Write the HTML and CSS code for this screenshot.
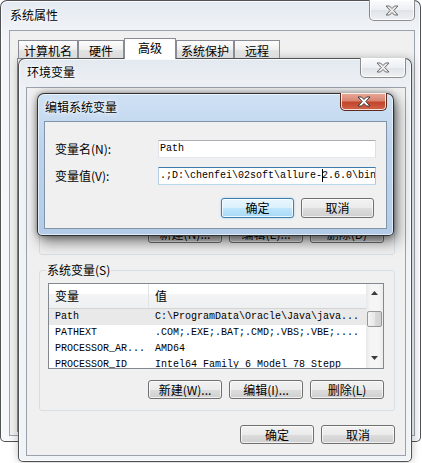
FILE: index.html
```html
<!DOCTYPE html>
<html lang="zh-CN">
<head>
  <meta charset="UTF-8">
  <title>编辑系统变量</title>
  <link rel="stylesheet" href="styles.css">
</head>
<body>
<div class="desktop">

  <!-- 系统属性 (back window) -->
  <div class="win sys">
    <div class="titlebar">
      <span class="title">系统属性</span>
      <span class="close"><svg width="14" height="11" viewBox="0 0 14 11"><polygon points="1,1 4.5,1 7,3.5 9.5,1 13,1 8.8,5.5 13,10 9.5,10 7,7.5 4.5,10 1,10 5.2,5.5"/></svg></span>
    </div>
    <div class="client">
      <div class="tabs">
        <span class="tab">计算机名</span>
        <span class="tab two">硬件</span>
        <span class="tab on">高级</span>
        <span class="tab narrow">系统保护</span>
        <span class="tab two">远程</span>
      </div>
      <div class="tabpage"></div>
    </div>
  </div>

  <!-- 环境变量 -->
  <div class="win env">
    <div class="titlebar">
      <span class="title">环境变量</span>
      <span class="close"><svg width="14" height="11" viewBox="0 0 14 11"><polygon points="1,1 4.5,1 7,3.5 9.5,1 13,1 8.8,5.5 13,10 9.5,10 7,7.5 4.5,10 1,10 5.2,5.5"/></svg></span>
    </div>
    <div class="client">
      <!-- user group sits behind the edit dialog -->
      <fieldset class="group user">
        <div class="list user">
          <div class="rows">
            <div class="row head"></div>
          </div>
        </div>
        <div class="btnrow">
          <span class="btn">新建(N)...</span>
          <span class="btn">编辑(E)...</span>
          <span class="btn">删除(D)</span>
        </div>
      </fieldset>

      <fieldset class="group">
        <legend>系统变量(S)</legend>
        <div class="list">
          <div class="rows">
            <div class="row head"><span class="c1">变量</span><span class="c2">值</span></div>
            <div class="row mono sel"><span class="c1">Path</span><span class="c2">C:\ProgramData\Oracle\Java\java...</span></div>
            <div class="row mono"><span class="c1">PATHEXT</span><span class="c2">.COM;.EXE;.BAT;.CMD;.VBS;.VBE;....</span></div>
            <div class="row mono"><span class="c1">PROCESSOR_AR...</span><span class="c2">AMD64</span></div>
            <div class="row mono"><span class="c1">PROCESSOR_ID</span><span class="c2">Intel64 Family 6 Model 78 Stepp</span></div>
          </div>
          <div class="vscroll">
            <span class="arrow"><svg width="7" height="4" viewBox="0 0 7 4"><polygon points="0,4 3.5,0 7,4"/></svg></span>
            <span class="thumb"></span>
            <span class="arrow down"><svg width="7" height="4" viewBox="0 0 7 4"><polygon points="0,0 7,0 3.5,4"/></svg></span>
          </div>
        </div>
        <div class="btnrow">
          <span class="btn">新建(W)...</span>
          <span class="btn">编辑(I)...</span>
          <span class="btn">删除(L)</span>
        </div>
      </fieldset>

      <div class="btnrow dlg">
        <span class="btn">确定</span>
        <span class="btn">取消</span>
      </div>
    </div>
  </div>

  <!-- 编辑系统变量 (active dialog) -->
  <div class="win edit">
    <div class="titlebar">
      <span class="title">编辑系统变量</span>
      <span class="close red"><svg width="14" height="11" viewBox="0 0 14 11"><polygon points="1,1 4.5,1 7,3.5 9.5,1 13,1 8.8,5.5 13,10 9.5,10 7,7.5 4.5,10 1,10 5.2,5.5"/></svg></span>
    </div>
    <div class="client">
      <div class="form">
        <label>变量名(N):</label>
        <div class="field mono">Path</div>
        <label>变量值(V):</label>
        <div class="field focus mono">.;D:\chenfei\02soft\allure-<span class="caret"></span>2.6.0\bin</div>
      </div>
      <div class="btnrow edit-btns">
        <span class="btn def">确定</span>
        <span class="btn">取消</span>
      </div>
    </div>
  </div>

</div>
</body>
</html>
```

FILE: styles.css
```css
* {
  box-sizing: border-box;
}

body {
  margin: 0;
  background: #fff;
  font-family: "Noto Sans CJK SC", sans-serif;
  font-size: 12px;
  color: #000;
}

.desktop {
  position: relative;
  width: 422px;
  height: 463px;
  overflow: hidden;
  background: #fff;
}

.mono {
  font-family: "Liberation Mono", "Noto Sans CJK SC", monospace;
  font-size: 10px;
}

/* aero windows */
.win {
  position: absolute;
  display: flex;
  flex-direction: column;
  border: 1px solid rgba(40, 40, 40, 0.8);
  border-radius: 7px 7px 5px 5px;
  box-shadow: inset 0 0 0 1px rgba(255, 255, 255, 0.75);
}

.titlebar {
  display: flex;
  justify-content: space-between;
  align-items: flex-start;
  flex: none;
}

.title {
  margin-left: 1px;
  line-height: 14px;
  text-shadow: 0 0 6px #fff, 0 0 3px #fff;
}

.close {
  display: flex;
  align-items: center;
  justify-content: center;
  width: 46px;
  height: 20px;
  margin-top: -1px;
  border: 1px solid rgba(70, 70, 70, 0.6);
  border-top: 0;
  border-radius: 0 0 5px 5px;
  background: linear-gradient(#fbfcfd, #eceff3 50%, #dfe3e8 51%, #eef1f4);
  box-shadow: inset 0 0 0 1px rgba(255, 255, 255, 0.8);
}
.close svg {
  fill: #ececec;
  stroke: #6b6b6b;
  stroke-width: 1;
}
.close.red {
  width: 47px;
  height: 18px;
  border-color: #5e2a20;
  background: linear-gradient(#eaa999, #d98672 45%, #c2452c 55%, #d0654b);
}
.close.red svg {
  fill: #fff;
  stroke: #3a3a3a;
}

.client {
  flex: 1;
  background: #f0f0f0;
  border: 1px solid #9aa3ad;
}

/* 系统属性 */
.sys {
  left: 0;
  top: 0;
  width: 421px;
  height: 442px;
  padding: 0 5px 5px 8px;
  background: linear-gradient(#e4eaf1, #f4f6f9 40px, #f5f7fa);
}
.sys .titlebar {
  height: 29px;
}
.sys .title {
  padding-top: 7px;
}
.sys .close {
  height: 21px;
}
.sys .client {
  display: flex;
  flex-direction: column;
  padding: 6px 0 3px 7px;
}

.tabs {
  position: relative;
  z-index: 1;
  display: flex;
  align-items: flex-end;
  height: 21px;
  margin-left: 1px;
}
.tab {
  height: 18px;
  padding: 2px 5px 0;
  line-height: 16px;
  border: 1px solid #898c95;
  border-bottom: 0;
  background: linear-gradient(#fdfdfd, #efefef 50%, #e3e3e3 51%, #dcdcdc);
}
.tab.two {
  padding: 2px 10px 0;
}
.tab.narrow {
  padding: 2px 4px 0;
}
.tab.on {
  height: 21px;
  padding: 1px 13px 0;
  margin-bottom: -1px;
  background: #fff;
}

.tabpage {
  flex: 1;
  margin-right: 8px;
  background: #fff;
  border: 1px solid #898c95;
}

/* 环境变量 */
.env {
  left: 18px;
  top: 58px;
  width: 394px;
  height: 404px;
  padding: 0 5px 5px 7px;
  background: linear-gradient(#e3e9f0, #eef1f5 30px, #f1f4f7);
  box-shadow: 0 0 8px rgba(0, 0, 0, 0.25), inset 0 0 0 1px rgba(255, 255, 255, 0.75);
}
.env .titlebar {
  height: 28px;
}
.env .title {
  padding-top: 6px;
}
.env .client {
  padding: 0 10px 0 12px;
}

.group {
  margin: 8px 0 0;
  padding: 6px 10px 11px 8px;
  min-width: 0;
  border: 1px solid #d5dfe5;
  border-radius: 3px;
}
.group.user {
  margin-top: 15px;
  padding-top: 12px;
}
.group legend {
  padding: 0 1px;
  margin-left: -2px;
  line-height: 14px;
}

.list {
  display: flex;
  height: 86px;
  border: 1px solid #828790;
  background: #fff;
  overflow: hidden;
}
.list.user {
  height: 97px;
}
.rows {
  flex: 1;
  min-width: 0;
}
.row {
  display: flex;
  height: 16px;
  line-height: 16px;
  white-space: nowrap;
}
.c1 {
  flex: none;
  width: 100px;
  padding-left: 6px;
  overflow: hidden;
}
.c2 {
  padding-left: 6px;
  overflow: hidden;
}
.row.head {
  height: 25px;
  line-height: 24px;
  border-bottom: 1px solid #d5d5d5;
  background: linear-gradient(#fff 40%, #f3f4f6 41%, #eff0f2);
}
.row.head .c1 {
  border-right: 1px solid #e3e4e6;
}
.row.sel {
  background: #e9e9e9;
}

.vscroll {
  flex: none;
  width: 17px;
  display: flex;
  flex-direction: column;
  align-items: center;
  background: linear-gradient(90deg, #e8e8e8, #f5f5f5 25%, #f5f5f5 75%, #ececec);
}
.arrow {
  display: flex;
  align-items: center;
  justify-content: center;
  width: 17px;
  height: 17px;
}
.arrow svg {
  fill: #3c3c3c;
}
.arrow.down {
  margin-top: auto;
  margin-bottom: 2px;
}
.thumb {
  width: 15px;
  height: 16px;
  margin-top: 10px;
  border: 1px solid #979797;
  border-radius: 2px;
  background: linear-gradient(90deg, #f4f4f4, #e8e8e8 50%, #dadada 51%, #d2d2d2);
}

.btnrow {
  display: flex;
  justify-content: flex-end;
  gap: 7px;
  margin-top: 11px;
}
.btnrow.dlg {
  margin-top: 14px;
}

.btn {
  display: flex;
  align-items: center;
  justify-content: center;
  width: 74px;
  height: 19px;
  border: 1px solid #707070;
  border-radius: 3px;
  background: linear-gradient(#f2f2f2, #ebebeb 50%, #dddddd 51%, #cfcfcf);
  box-shadow: inset 0 0 0 1px rgba(255, 255, 255, 0.7);
  line-height: 16px;
  white-space: nowrap;
}
.btn.def {
  border-color: #3c7fb1;
  background: linear-gradient(#eaf6fd, #d9f0fc 50%, #bee6fd 51%, #a7d9f5);
  box-shadow: inset 0 0 0 1px rgba(255, 255, 255, 0.8), 0 0 2px #8cc8ef;
}

/* 编辑系统变量 */
.edit {
  left: 37px;
  top: 93px;
  width: 357px;
  height: 143px;
  padding: 0 6px 6px;
  border-color: rgba(20, 20, 20, 0.85);
  background: linear-gradient(#cfe1f4, #bcd3ec 40%, #b2cce8);
  box-shadow: 3px 6px 14px rgba(0, 0, 0, 0.5), 0 0 6px rgba(0, 0, 0, 0.4), inset 0 0 0 1px rgba(255, 255, 255, 0.6);
}
.edit .titlebar {
  height: 27px;
}
.edit .title {
  padding-top: 6px;
}
.edit .client {
  padding: 18px 10px 0;
  border-color: #8294aa;
}

.form {
  display: grid;
  grid-template-columns: 103px 1fr;
  row-gap: 9px;
  align-items: center;
}
.form label {
  line-height: 16px;
}
.field {
  height: 18px;
  padding-left: 1px;
  line-height: 16px;
  white-space: nowrap;
  overflow: hidden;
  background: #fff;
  border: 1px solid;
  border-color: #abadb3 #dbdfe6 #e3e9ef #e2e3ea;
}
.field.focus {
  border-color: #3d7bad #a4c9e3 #b7d9ed #b5cfe7;
}
.caret {
  display: inline-block;
  width: 0;
  height: 13px;
  margin-right: -1px;
  vertical-align: middle;
  border-left: 1px solid #000;
}

.edit-btns {
  gap: 7px;
  margin: 13px 2px 0 0;
}
.edit-btns .btn {
  width: 73px;
  height: 20px;
}
```
